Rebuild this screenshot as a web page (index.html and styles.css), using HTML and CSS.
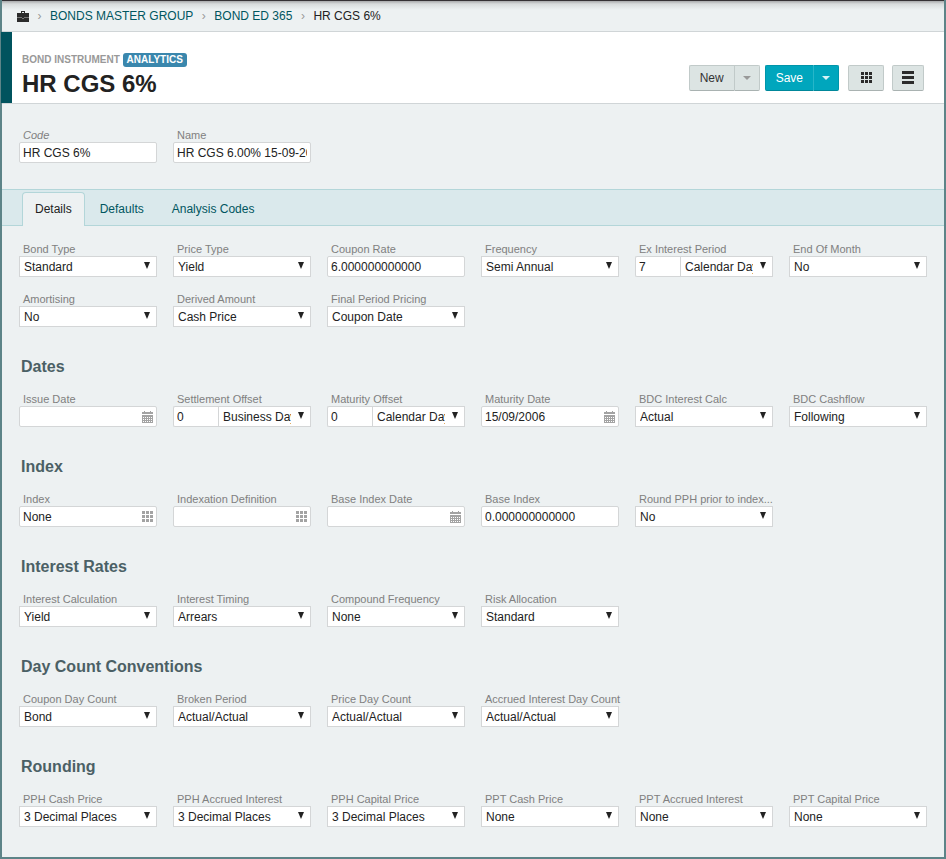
FILE: index.html
```html
<!DOCTYPE html>
<html lang="en">
<head>
<meta charset="utf-8">
<title>HR CGS 6%</title>
<link rel="stylesheet" href="styles.css">
</head>
<body>
<svg class="defs" aria-hidden="true">
  <symbol id="grid" viewBox="0 0 11 11"><path d="M0 0h3v3H0zM4 0h3v3H4zM8 0h3v3H8zM0 4h3v3H0zM4 4h3v3H4zM8 4h3v3H8zM0 8h3v3H0zM4 8h3v3H4zM8 8h3v3H8z"/></symbol>
  <symbol id="calendar" viewBox="0 0 11 12"><path d="M2 0h1v1h5V0h1v1h2v2H0V1h2z"/><path fill-rule="evenodd" d="M0 4h11v8H0zM1 6v1h1V6zM3 6v1h1V6zM5 6v1h1V6zM7 6v1h1V6zM9 6v1h1V6zM1 8v1h1V8zM3 8v1h1V8zM5 8v1h1V8zM7 8v1h1V8zM9 8v1h1V8zM1 10v1h1v-1zM3 10v1h1v-1zM5 10v1h1v-1zM7 10v1h1v-1zM9 10v1h1v-1z"/></symbol>
</svg>
<div class="panel">
  <nav class="crumbs" aria-label="Breadcrumb">
    <a class="home" href="#" aria-label="Home"><svg width="12" height="11" viewBox="0 0 12 11"><path fill-rule="evenodd" d="M4 0h4v2h4v9H0V2h4zM5 1v1h2V1z"/><path class="seam" d="M0 6h5v1h2V6h5v1H7v1H5V7H0z"/></svg></a>
    <span class="sep">›</span>
    <a href="#">BONDS MASTER GROUP</a>
    <span class="sep">›</span>
    <a href="#">BOND ED 365</a>
    <span class="sep">›</span>
    <span>HR CGS 6%</span>
  </nav>

  <header class="title-bar">
    <div>
      <div class="kicker">BOND INSTRUMENT <span class="badge">ANALYTICS</span></div>
      <h1>HR CGS 6%</h1>
    </div>
    <div class="actions">
      <div class="splits">
        <div class="split"><button class="btn">New</button><button class="btn drop" aria-label="More new options"></button></div>
        <div class="split primary"><button class="btn">Save</button><button class="btn drop" aria-label="More save options"></button></div>
      </div>
      <button class="btn tiles" aria-label="Grid"><svg width="11" height="11"><use href="#grid"/></svg></button>
      <button class="btn menu" aria-label="Menu"><svg width="12" height="13" viewBox="0 0 12 13"><path d="M0 0h12v3H0zM0 5h12v3H0zM0 10h12v3H0z"/></svg></button>
    </div>
  </header>

  <form>
    <div class="fields identity">
      <div class="field"><label class="key" for="code">Code</label><input id="code" value="HR CGS 6%"></div>
      <div class="field"><label for="name">Name</label><input id="name" value="HR CGS 6.00% 15-09-2006"></div>
    </div>

    <nav class="tabs" aria-label="Sections">
      <a class="tab active" href="#">Details</a>
      <a class="tab" href="#">Defaults</a>
      <a class="tab" href="#">Analysis Codes</a>
    </nav>

    <div class="details">
      <div class="fields">
        <div class="field"><label for="bond-type">Bond Type</label><div class="pick"><select id="bond-type"><option>Standard</option></select></div></div>
        <div class="field"><label for="price-type">Price Type</label><div class="pick"><select id="price-type"><option>Yield</option></select></div></div>
        <div class="field"><label for="coupon-rate">Coupon Rate</label><input id="coupon-rate" value="6.000000000000"></div>
        <div class="field"><label for="frequency">Frequency</label><div class="pick"><select id="frequency"><option>Semi Annual</option></select></div></div>
        <div class="field"><label for="ex-interest">Ex Interest Period</label><div class="pair"><input id="ex-interest" value="7"><div class="pick"><select aria-label="Ex Interest Period unit"><option>Calendar Days</option></select></div></div></div>
        <div class="field"><label for="end-of-month">End Of Month</label><div class="pick"><select id="end-of-month"><option>No</option></select></div></div>
        <div class="field"><label for="amortising">Amortising</label><div class="pick"><select id="amortising"><option>No</option></select></div></div>
        <div class="field"><label for="derived">Derived Amount</label><div class="pick"><select id="derived"><option>Cash Price</option></select></div></div>
        <div class="field"><label for="final-period">Final Period Pricing</label><div class="pick"><select id="final-period"><option>Coupon Date</option></select></div></div>
      </div>

      <h2>Dates</h2>
      <div class="fields">
        <div class="field"><label for="issue-date">Issue Date</label><div class="lookup"><input id="issue-date"><svg width="11" height="12"><use href="#calendar"/></svg></div></div>
        <div class="field"><label for="settlement">Settlement Offset</label><div class="pair"><input id="settlement" value="0"><div class="pick"><select aria-label="Settlement Offset unit"><option>Business Days</option></select></div></div></div>
        <div class="field"><label for="maturity-offset">Maturity Offset</label><div class="pair"><input id="maturity-offset" value="0"><div class="pick"><select aria-label="Maturity Offset unit"><option>Calendar Days</option></select></div></div></div>
        <div class="field"><label for="maturity-date">Maturity Date</label><div class="lookup"><input id="maturity-date" value="15/09/2006"><svg width="11" height="12"><use href="#calendar"/></svg></div></div>
        <div class="field"><label for="bdc-interest">BDC Interest Calc</label><div class="pick"><select id="bdc-interest"><option>Actual</option></select></div></div>
        <div class="field"><label for="bdc-cashflow">BDC Cashflow</label><div class="pick"><select id="bdc-cashflow"><option>Following</option></select></div></div>
      </div>

      <h2>Index</h2>
      <div class="fields">
        <div class="field"><label for="index">Index</label><div class="lookup"><input id="index" value="None"><svg width="11" height="11"><use href="#grid"/></svg></div></div>
        <div class="field"><label for="indexation">Indexation Definition</label><div class="lookup"><input id="indexation"><svg width="11" height="11"><use href="#grid"/></svg></div></div>
        <div class="field"><label for="base-date">Base Index Date</label><div class="lookup"><input id="base-date"><svg width="11" height="12"><use href="#calendar"/></svg></div></div>
        <div class="field"><label for="base-index">Base Index</label><input id="base-index" value="0.000000000000"></div>
        <div class="field"><label for="round-pph">Round PPH prior to index...</label><div class="pick"><select id="round-pph"><option>No</option></select></div></div>
      </div>

      <h2>Interest Rates</h2>
      <div class="fields">
        <div class="field"><label for="interest-calc">Interest Calculation</label><div class="pick"><select id="interest-calc"><option>Yield</option></select></div></div>
        <div class="field"><label for="timing">Interest Timing</label><div class="pick"><select id="timing"><option>Arrears</option></select></div></div>
        <div class="field"><label for="compound">Compound Frequency</label><div class="pick"><select id="compound"><option>None</option></select></div></div>
        <div class="field"><label for="risk">Risk Allocation</label><div class="pick"><select id="risk"><option>Standard</option></select></div></div>
      </div>

      <h2>Day Count Conventions</h2>
      <div class="fields">
        <div class="field"><label for="coupon-days">Coupon Day Count</label><div class="pick"><select id="coupon-days"><option>Bond</option></select></div></div>
        <div class="field"><label for="broken">Broken Period</label><div class="pick"><select id="broken"><option>Actual/Actual</option></select></div></div>
        <div class="field"><label for="price-days">Price Day Count</label><div class="pick"><select id="price-days"><option>Actual/Actual</option></select></div></div>
        <div class="field"><label for="accrued-days">Accrued Interest Day Count</label><div class="pick"><select id="accrued-days"><option>Actual/Actual</option></select></div></div>
      </div>

      <h2>Rounding</h2>
      <div class="fields">
        <div class="field"><label for="pph-cash">PPH Cash Price</label><div class="pick"><select id="pph-cash"><option>3 Decimal Places</option></select></div></div>
        <div class="field"><label for="pph-accrued">PPH Accrued Interest</label><div class="pick"><select id="pph-accrued"><option>3 Decimal Places</option></select></div></div>
        <div class="field"><label for="pph-capital">PPH Capital Price</label><div class="pick"><select id="pph-capital"><option>3 Decimal Places</option></select></div></div>
        <div class="field"><label for="ppt-cash">PPT Cash Price</label><div class="pick"><select id="ppt-cash"><option>None</option></select></div></div>
        <div class="field"><label for="ppt-accrued">PPT Accrued Interest</label><div class="pick"><select id="ppt-accrued"><option>None</option></select></div></div>
        <div class="field"><label for="ppt-capital">PPT Capital Price</label><div class="pick"><select id="ppt-capital"><option>None</option></select></div></div>
      </div>
    </div>
  </form>
</div>
</body>
</html>
```
FILE: styles.css
```css
* { box-sizing: border-box; }

body {
  margin: 0;
  padding: 0 2px 2px;
  background: #5d8488;
  color: #222;
  font: 12px/16px "Liberation Sans", Arial, sans-serif;
}

a { color: #00565f; text-decoration: none; }
button, input, select { font: inherit; color: inherit; margin: 0; }
.defs { display: none; }

.panel { background: #edf1f2; border-top: 1px solid #353135; }

.crumbs {
  display: flex;
  align-items: center;
  height: 31px;
  padding: 0 15px;
  border-bottom: 1px solid #d0d5d7;
  background: linear-gradient(#a8a9ab, #d8dbdc 3px, #edf1f2 9px);
}
.home { display: flex; }
.home svg { fill: #2b2b2b; }
.home .seam { fill: #777; }
.sep { width: 21px; text-align: center; color: #999; }

.title-bar {
  display: flex;
  justify-content: space-between;
  align-items: center;
  margin-left: -1px;
  padding: 21px 20px 5px 10px;
  border-left: 11px solid #00535e;
  background: #fff;
}
.kicker { font-size: 10px; font-weight: bold; line-height: 14px; color: #999; }
.badge {
  display: inline-block;
  padding: 0 4px;
  border-radius: 3px;
  background: #3a87ad;
  color: #fff;
}
h1 { margin: 3px 0 0; font-size: 24px; line-height: 28px; }

.actions { display: flex; gap: 8px; padding-top: 4px; }
.splits { display: flex; gap: 5px; padding-right: 1px; }
.split { display: flex; }
.btn {
  display: flex;
  justify-content: center;
  align-items: center;
  height: 26px;
  padding: 0 10px;
  border: 1px solid #c1cac9;
  border-bottom-color: #a9b2b1;
  border-radius: 2px;
  background: #dce4e3;
  color: #333;
}
.split .btn:first-child { border-right: 0; border-radius: 2px 0 0 2px; }
.split .drop { width: 26px; padding: 0; border-radius: 0 2px 2px 0; }
.drop::after {
  content: "";
  border: 4px solid transparent;
  border-top-color: #999;
  border-bottom: 0;
}
.primary .btn { border-color: #0095aa; border-bottom-color: #00879a; background: #00a6bd; color: #fff; }
.primary .drop::after { border-top-color: #d5f3f7; }
.primary .drop { border-left-color: #27b6c9; }
.tiles { width: 36px; }
.menu { width: 32px; }
.btn svg { flex: none; fill: #2b2b2b; }

.fields {
  display: grid;
  grid-template-columns: repeat(6, minmax(0, 1fr));
  gap: 14px 16px;
}
.identity { padding: 23px 17px 26px; border-top: 1px solid #d0d5d7; }
.field label {
  display: block;
  padding: 2px 0 0 4px;
  font-size: 11px;
  line-height: 13px;
  color: #808080;
  white-space: nowrap;
}
.field .key { font-style: italic; }
input, select {
  display: block;
  width: 100%;
  height: 21px;
  border: 1px solid #d4d6d7;
  background: #fff;
}
input { padding: 0 3px; border-radius: 2px; }
select { appearance: none; padding: 0 18px 0 4px; border-radius: 0; }

.pick, .lookup { position: relative; }
.pick::after {
  content: "";
  position: absolute;
  top: 6px;
  right: 7px;
  width: 6px;
  height: 7px;
  background: #222;
  clip-path: polygon(0 0, 100% 0, 50% 100%);
  pointer-events: none;
}
.lookup svg { position: absolute; top: 5px; right: 4px; fill: #a3a3a3; }
.lookup input { padding-right: 20px; }
.pair { display: grid; grid-template-columns: 45px 1fr; }
.pair input { border-right: 0; border-radius: 2px 0 0 2px; }
.pair select { padding-right: 19px; }

.tabs {
  display: flex;
  gap: 2px;
  padding: 2px 20px 0;
  border-top: 1px solid #b3d6d9;
  border-bottom: 1px solid #b3d6d9;
  background: #dae9ec;
}
.tab {
  padding: 8px 12px;
  border: 1px solid transparent;
  border-bottom: 0;
  border-radius: 4px 4px 0 0;
}
.tab.active {
  margin-bottom: -1px;
  padding-bottom: 9px;
  border-color: #b3d6d9;
  background: #edf1f2;
  color: #222;
}

.details { padding: 15px 17px 30px; }
h2 { margin: 29px 2px 13px; font-size: 16px; line-height: 22px; color: #4b6065; }
```
